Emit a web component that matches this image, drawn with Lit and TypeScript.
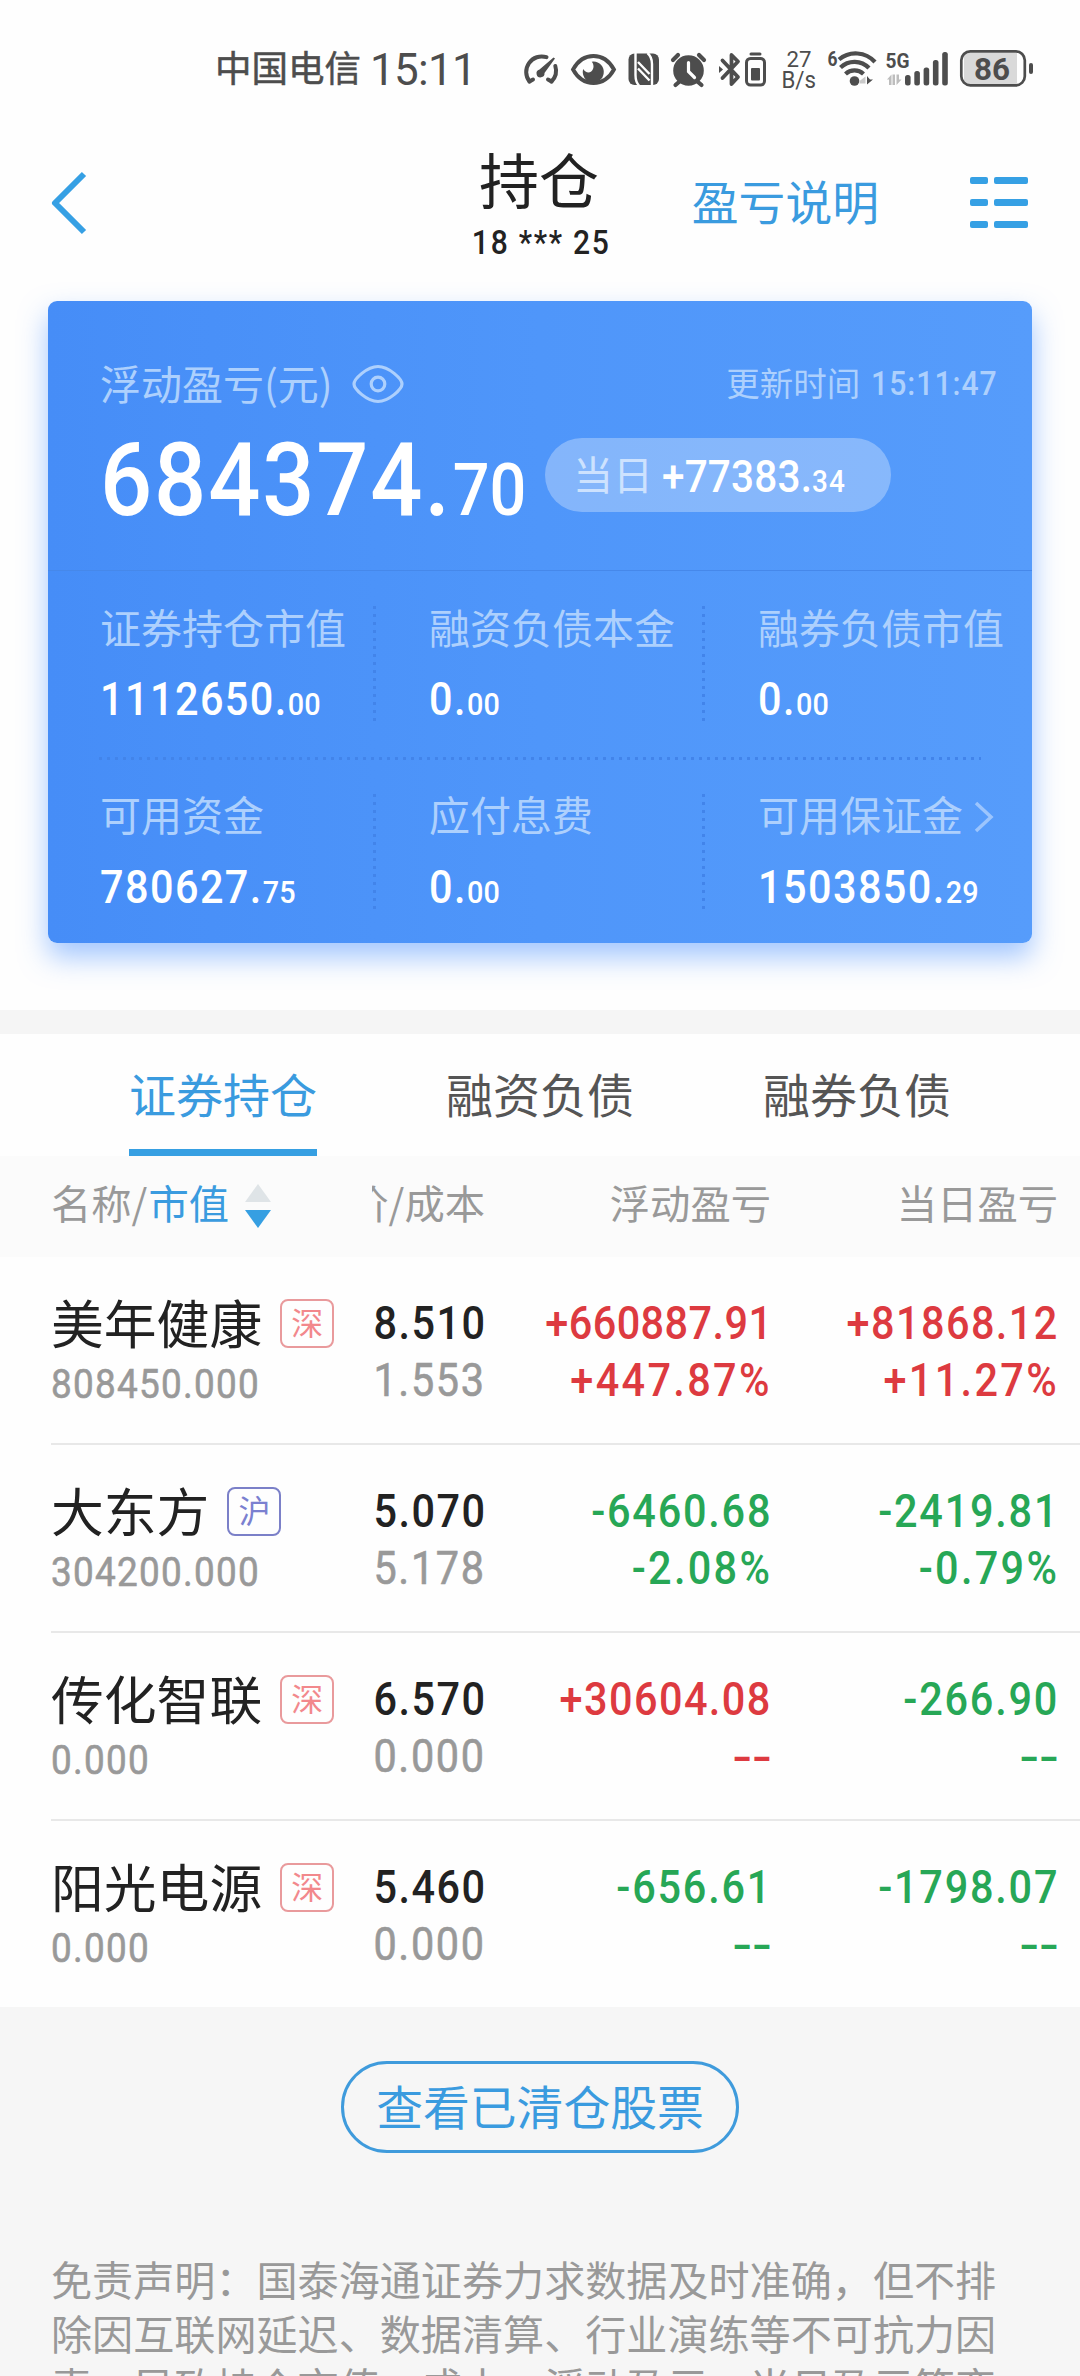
import { LitElement, html, css, svg } from "lit";
import { customElement, property } from "lit/decorators.js";

const CJK = css`"Noto Sans CJK SC", sans-serif`;
const NUM = css`Roboto, "Noto Sans CJK SC", sans-serif`;

@customElement("status-bar")
class StatusBar extends LitElement {
  static styles = css`
    :host { display: block; height: 124px; }
    .bar { display: flex; align-items: center; height: 100%; box-sizing: border-box; padding: 14px 0 0 215px; color: #4d4d4d; }
    .carrier { font: 400 36.5px/40px ${CJK}; -webkit-text-stroke: .5px #4d4d4d; width: 155px; margin-top: -4px; }
    .clock { font: 400 44px/44px ${NUM}; letter-spacing: -.7px; width: 148px; margin-top: 1px; }
    svg { display: block; flex: none; fill: #4d4d4d; }
  `;
  render() {
    return html`<div class="bar">
      <div class="carrier">中国电信</div>
      <div class="clock">15:11</div>
      <svg width="522" height="44" viewBox="518 47 522 44">
        <g fill="none" stroke="#4d4d4d" stroke-width="4" stroke-linecap="round">
          <path d="M529.500 81.500A15.500 15.500 0 0 1 546.500 57.200" />
          <path d="M555.300 66A15.500 15.500 0 0 1 551.500 81.500"/>
          <path d="M529.500 81.500l3.500-2M551.500 81.500l-3.500-2"/>
        </g>
        <path d="M553.500 57.500l1.500 1-10.500 14.500a4 4 0 1 1-5-3.500z"/>
        <path d="M573 69.500c10-18 31-18 41 0c-10 18-31 18-41 0z" fill="none" stroke="#4d4d4d" stroke-width="3.800"/>
        <path d="M593.500 61.500a10.500 10.500 0 1 1-10.300 7.500c2 3.500 5.500 4.500 8 2.500c3-2.500 3-7 .5-9.800z"/>
        <rect x="628.500" y="53.500" width="30.500" height="31.500" rx="6"/>
        <path d="M635.500 53v22q0 7 3.500 10.500M652 85.500V64q0-7-4.500-11M638 62l11.500 12M638 68.500l11.500 12" fill="none" stroke="#fff" stroke-width="2.400"/>
        <circle cx="688.500" cy="70.500" r="15.300"/>
        <path d="M673 60l5-5M704 60l-5-5M679 82l-3.500 3M698 82l3.500 3" stroke="#4d4d4d" stroke-width="4.200" stroke-linecap="round"/>
        <path d="M688.500 62.500v9l6 6" fill="none" stroke="#fff" stroke-width="3.200" stroke-linecap="round"/>
        <path d="M722.500 60.500L738 77l-6.500 7V55l6.500 6.500L722.500 78" fill="none" stroke="#4d4d4d" stroke-width="3.800" stroke-linejoin="round" stroke-linecap="round"/>
        <path d="M719 66l4 3.500-4 3.500z"/>
        <rect x="746.500" y="58.500" width="18" height="26.500" rx="4" fill="none" stroke="#4d4d4d" stroke-width="3"/>
        <rect x="751" y="68" width="9" height="12.500" rx="1"/>
        <rect x="749.500" y="52.500" width="12" height="3" rx="1.500"/>
        <text x="786.500" y="67" font-family="Roboto" font-size="22.500" font-weight="400" textLength="25" lengthAdjust="spacingAndGlyphs">27</text>
        <text x="781.500" y="88" font-family="Roboto" font-size="23.500" font-weight="400" textLength="34.500" lengthAdjust="spacingAndGlyphs">B/s</text>
        <text x="827.500" y="66" font-family="Roboto" font-size="20" font-weight="700" textLength="10" lengthAdjust="spacingAndGlyphs">6</text>
        <g fill="none" stroke="#4d4d4d" stroke-width="4.200">
          <path d="M839 59.500a26 26 0 0 1 36 2.500"/>
          <path d="M840.500 67.500a20 20 0 0 1 28.500 0.500"/>
          <path d="M845.500 74a13 13 0 0 1 18 0"/>
        </g>
        <circle cx="854.500" cy="81" r="4.800"/>
        <path d="M859.500 81l6-4.500v7h-6z" fill="#c9c9c9"/><path d="M867 76v8.500l6-5h-3z"/>
        <text x="885.500" y="67.500" font-family="Roboto" font-size="21" font-weight="700" textLength="24" lengthAdjust="spacingAndGlyphs">5G</text>
        <path d="M887 79.500l4.500-5v10.500h-2.500v-5.500zM892.500 74.500h2.500v10.500h-2.500zM896.500 74.500h2.500v5h2.500l-5 5.500z" fill="#bdbdbd"/>
        <g>
          ${[[905, 75], [914.3, 71], [923.6, 67.5], [932.9, 60], [942.2, 52]].map(
            ([x, y]) => svg`<rect x=${x} y=${y} width="5.600" height=${85.5 - y} rx="2.500"/>`
          )}
        </g>
        <rect x="964" y="53" width="53" height="31" fill="#d9d9d9"/>
        <rect x="961.300" y="51.300" width="63.500" height="34" rx="9" fill="none" stroke="#4d4d4d" stroke-width="2.700"/>
        <rect x="1029" y="63" width="4" height="11" rx="2"/>
        <text x="974" y="79.500" font-family="Roboto" font-size="31.500" font-weight="700" textLength="36" lengthAdjust="spacingAndGlyphs">86</text>
      </svg>
    </div>`;
  }
}

@customElement("nav-header")
class NavHeader extends LitElement {
  static styles = css`
    :host { display: block; height: 157px; }
    .nav { display: grid; grid-template-columns: 1fr auto 1fr; align-items: center; height: 100%; padding: 0 52px 0 50px; color: #222; }
    .center { display: flex; flex-direction: column; align-items: center; gap: 14px; padding-top: 1px; }
    .title { font: 400 60px/66px ${CJK}; }
    .sub { font: 500 33px/36px ${NUM}; letter-spacing: 1.9px; transform: scaleX(.91); margin: 0 -22px 0 -18px; white-space: nowrap; }
    .right { display: flex; align-items: center; justify-content: flex-end; gap: 91px; }
    .link { font: 400 46.8px/50px ${CJK}; color: #3a9bdf; margin-top: -5px; white-space: nowrap; }
    svg { display: block; flex: none; }
  `;
  render() {
    return html`<div class="nav">
      <svg width="38" height="64" viewBox="0 0 38 64"><path d="M34 3L5 32l29 29" fill="none" stroke="#36a0e4" stroke-width="6" stroke-linejoin="round"/></svg>
      <div class="center"><div class="title">持仓</div><div class="sub">18 *** 25</div></div>
      <div class="right">
        <div class="link">盈亏说明</div>
        <svg width="58" height="52" viewBox="0 0 58 52" fill="#36a0e4">
          ${[0, 22, 44].map((y) => svg`<rect x="0" y=${y} width="18" height="7" rx="2"/><rect x="24" y=${y} width="34" height="7" rx="2"/>`)}
        </svg>
      </div>
    </div>`;
  }
}

interface Metric { label: string; whole: string; cents: string; link?: boolean }

@customElement("asset-card")
class AssetCard extends LitElement {
  static styles = css`
    :host { display: block; margin: 20px 48px 0; }
    .card { height: 642px; border-radius: 9px; background: linear-gradient(90deg, #468df7, #4f96fa 50%, #569cfb); box-shadow: 0 14px 28px rgba(72, 143, 255, .5); color: #fff; }
    .top { height: 270px; box-sizing: border-box; padding: 60px 34px 0 52px; border-bottom: 1px solid #4688ea; }
    .head { display: flex; align-items: center; height: 46px; color: #add0fd; }
    .label { font: 400 41px/41px ${CJK}; white-space: nowrap; }
    .head .label { margin-top: -4px; }
    .eye { margin-left: 19px; }
    .time { margin-left: auto; display: flex; align-items: center; font: 400 33.5px/34px ${CJK}; }
    .time span { margin-top: -4px; }
    .time b { font: 500 33.5px/34px ${NUM}; letter-spacing: 1.1px; margin-left: -3px; transform: scaleX(.9); transform-origin: right; }
    .sum { display: flex; align-items: flex-start; margin-top: 31px; }
    .big { width: 445px; flex: none; font: 500 102px/80px ${NUM}; letter-spacing: 2.1px; margin-top: 2px; white-space: nowrap; transform: scaleX(.9); transform-origin: left; }
    .big small { font-size: 72px; letter-spacing: 0; line-height: 1px; margin-left: 1px; }
    .pill { width: 346px; height: 74px; box-sizing: border-box; border-radius: 37px; background: rgba(255, 255, 255, .3); display: flex; align-items: center; padding-left: 28px; white-space: nowrap; }
    .pill span { font: 400 40px/44px ${CJK}; color: #cde2fe; margin-top: -5px; }
    .pill b { font: 500 45px/50px ${NUM}; letter-spacing: .2px; margin: 3px 0 0 9px; transform: scaleX(.9); transform-origin: left; }
    .pill small { font-size: 31px; line-height: 1px; letter-spacing: 1.2px; }
    .row { display: grid; grid-template-columns: 276px 276px 260px; column-gap: 53px; margin-left: 52px; height: 115px; }
    .row.first { margin-top: 35px; }
    .row.second { margin-top: 34px; }
    .row.second .label { margin-top: -1px; }
    .cell { display: flex; flex-direction: column; justify-content: space-between; }
    .cell:not(:last-child) { background: repeating-linear-gradient(180deg, #4284ea 0 3px, transparent 3px 8px) right / 3px 100% no-repeat; }
    .cell .label { color: #add0fd; display: flex; align-items: center; gap: 11px; }
    .cell svg { margin-top: 6px; }
    .value { font: 500 46px/44px ${NUM}; letter-spacing: 1.6px; transform: scaleX(.9); transform-origin: left; white-space: nowrap; }
    .value small { font-size: 32px; letter-spacing: .2px; line-height: 1px; }
    .rule { height: 3px; margin: 36px 51px 0; background: repeating-linear-gradient(90deg, #4284ea 0 3px, transparent 3px 8px); }
  `;
  private metrics: Metric[][] = [
    [
      { label: "证券持仓市值", whole: "1112650", cents: "00" },
      { label: "融资负债本金", whole: "0", cents: "00" },
      { label: "融券负债市值", whole: "0", cents: "00" },
    ],
    [
      { label: "可用资金", whole: "780627", cents: "75" },
      { label: "应付息费", whole: "0", cents: "00" },
      { label: "可用保证金", whole: "1503850", cents: "29", link: true },
    ],
  ];
  private cell(m: Metric) {
    return html`<div class="cell">
      <div class="label">${m.label}${m.link
        ? html`<svg width="20" height="32" viewBox="0 0 20 32"><path d="M2 2l15 14L2 30" fill="none" stroke="#9cc5fd" stroke-width="3.500"/></svg>`
        : ""}</div>
      <div class="value">${m.whole}.<small>${m.cents}</small></div>
    </div>`;
  }
  render() {
    return html`<div class="card">
      <div class="top">
        <div class="head">
          <div class="label">浮动盈亏(元)</div>
          <svg class="eye" width="52" height="40" viewBox="0 0 52 40" fill="none" stroke="#add0fd" stroke-width="3.200"><path d="M2 20C2 15 15 2.500 26 2.500S50 15 50 20S37 37.500 26 37.500S2 25 2 20z"/><circle cx="26" cy="20" r="6.800"/></svg>
          <div class="time"><span>更新时间</span><b>15:11:47</b></div>
        </div>
        <div class="sum">
          <div class="big">684374.<small>70</small></div>
          <div class="pill"><span>当日</span><b>+77383.<small>34</small></b></div>
        </div>
      </div>
      <div class="row first">${this.metrics[0].map((m) => this.cell(m))}</div>
      <div class="rule"></div>
      <div class="row second">${this.metrics[1].map((m) => this.cell(m))}</div>
    </div>`;
  }
}

interface Holding {
  name: string; market: "深" | "沪"; value: string; price: string; cost: string;
  gain: string; gainPct: string; day: string; dayPct: string;
}

@customElement("holding-row")
class HoldingRow extends LitElement {
  @property({ attribute: false }) item!: Holding;
  static styles = css`
    :host { display: block; margin-left: 51px; height: 188px; box-sizing: border-box; border-bottom: 2px solid #e8e8e8; }
    :host([last]) { border-bottom: 0; height: 186px; }
    .row { display: grid; grid-template-columns: 321px 113px 286px 287px; }
    .name { display: flex; align-items: center; gap: 18px; font: 400 52.8px/60px ${CJK}; color: #222; margin-top: 34px; height: 60px; white-space: nowrap; }
    .badge { box-sizing: border-box; width: 54px; height: 49px; border: 2px solid #e99a9c; border-radius: 8px; color: #f2888c; font: 400 32px/40px ${CJK}; text-align: center; margin-top: 4px; }
    .badge.sh { color: #7b80d0; border-color: #7b80c8; }
    .value { font: 400 41px/40px ${NUM}; letter-spacing: 1.4px; color: #999; margin-top: 13px; -webkit-text-stroke: .6px #999; transform: scaleX(.9); transform-origin: left; }
    .nums { display: flex; flex-direction: column; align-items: flex-end; font: 500 46px/57px ${NUM}; letter-spacing: 1.6px; padding-top: 38px; color: #222; white-space: nowrap; }
    .nums > div { transform: scaleX(.9); transform-origin: right; margin-right: -1px; }
    .nums .cost { color: #999; font-weight: 400; letter-spacing: 1.8px; -webkit-text-stroke: .6px #999; }
    .up { color: #dd3a40; }
    .down { color: #27a756; }
    .nums .tight { letter-spacing: .5px; }
    .nums .minus { letter-spacing: 2px; }
    .nums .pct { letter-spacing: 2.6px; }
    .nums .none { font-family: Inter, Roboto, sans-serif; letter-spacing: -1.5px; transform: none; margin: 0; }
  `;
  private pair(a: string, b: string) {
    return html`<div class="nums ${a.startsWith("+") ? "up" : "down"}">
      <div class=${a.length > 9 ? (a === "+660887.91" ? "tight" : "amount") : a.startsWith("-") ? "minus" : "amount"}>${a}</div>
      <div class=${b === "--" ? "none" : "pct"}>${b}</div>
    </div>`;
  }
  render() {
    const h = this.item;
    return html`<div class="row">
      <div>
        <div class="name">${h.name}<div class="badge ${h.market === "沪" ? "sh" : "sz"}">${h.market}</div></div>
        <div class="value">${h.value}</div>
      </div>
      <div class="nums"><div>${h.price}</div><div class="cost">${h.cost}</div></div>
      ${this.pair(h.gain, h.gainPct)}
      ${this.pair(h.day, h.dayPct)}
    </div>`;
  }
}

@customElement("app-root")
class AppRoot extends LitElement {
  static styles = css`
    :host { display: block; width: 1080px; height: 2376px; overflow: hidden; background: #fefefe; }
    .band { height: 24px; background: #f5f5f5; margin-top: 67px; }
    .tabs { display: flex; justify-content: space-evenly; height: 122px; font: 400 47px/50px ${CJK}; color: #555; }
    .tab { box-sizing: border-box; height: 122px; padding-top: 34px; }
    .tab.on { color: #3a9bdf; border-bottom: 7px solid #369fe2; }
    .cols { display: grid; grid-template-columns: 321px 113px 286px 287px; height: 101px; padding-left: 51px; box-sizing: border-box; background: #fbfbfb; color: #999; font: 400 40.3px/44px ${CJK}; padding-top: 24px; white-space: nowrap; }
    .cols .first { display: flex; }
    .cols .first b { font-weight: 400; color: #3a9bdf; margin-left: 1px; }
    .cols .first svg { margin: 4px 0 0 16px; }
    .cols .clip { display: flex; justify-content: flex-end; overflow: hidden; }
    .cols .r { text-align: right; }
    .bottom { background: #f6f6f6; height: 371px; box-sizing: border-box; padding-top: 54px; display: flex; flex-direction: column; }
    .btn { align-self: center; flex: none; box-sizing: border-box; width: 398px; height: 92px; border: 3px solid #3f9bdc; border-radius: 46px; color: #3a9bdf; font: 400 46.8px/50px ${CJK}; text-align: center; padding-top: 16px; }
    .note { margin: 99px 0 0 51px; font: 400 41.1px/53.7px ${CJK}; color: #999; white-space: nowrap; }
  `;
  private holdings: Holding[] = [
    { name: "美年健康", market: "深", value: "808450.000", price: "8.510", cost: "1.553", gain: "+660887.91", gainPct: "+447.87%", day: "+81868.12", dayPct: "+11.27%" },
    { name: "大东方", market: "沪", value: "304200.000", price: "5.070", cost: "5.178", gain: "-6460.68", gainPct: "-2.08%", day: "-2419.81", dayPct: "-0.79%" },
    { name: "传化智联", market: "深", value: "0.000", price: "6.570", cost: "0.000", gain: "+30604.08", gainPct: "--", day: "-266.90", dayPct: "--" },
    { name: "阳光电源", market: "深", value: "0.000", price: "5.460", cost: "0.000", gain: "-656.61", gainPct: "--", day: "-1798.07", dayPct: "--" },
  ];
  render() {
    return html`
      <status-bar></status-bar>
      <nav-header></nav-header>
      <asset-card></asset-card>
      <div class="band"></div>
      <div class="tabs">
        <div class="tab on">证券持仓</div><div class="tab">融资负债</div><div class="tab">融券负债</div>
      </div>
      <div class="cols">
        <div class="first">名称/<b>市值</b><svg width="26" height="44" viewBox="0 0 26 44"><path d="M13 0l13 18H0z" fill="#dfe4e7"/><path d="M0 26h26L13 44z" fill="#369fe2"/></svg></div>
        <div class="clip"><span>价/成本</span></div>
        <div class="r">浮动盈亏</div>
        <div class="r">当日盈亏</div>
      </div>
      ${this.holdings.map((h, i) => html`<holding-row .item=${h} ?last=${i === this.holdings.length - 1}></holding-row>`)}
      <div class="bottom">
        <div class="btn">查看已清仓股票</div>
        <div class="note">
          <div>免责声明：国泰海通证券力求数据及时准确，但不排</div>
          <div>除因互联网延迟、数据清算、行业演练等不可抗力因</div>
          <div>素，导致持仓市值、成本、浮动盈亏、当日盈亏等变</div>
        </div>
      </div>`;
  }
}
